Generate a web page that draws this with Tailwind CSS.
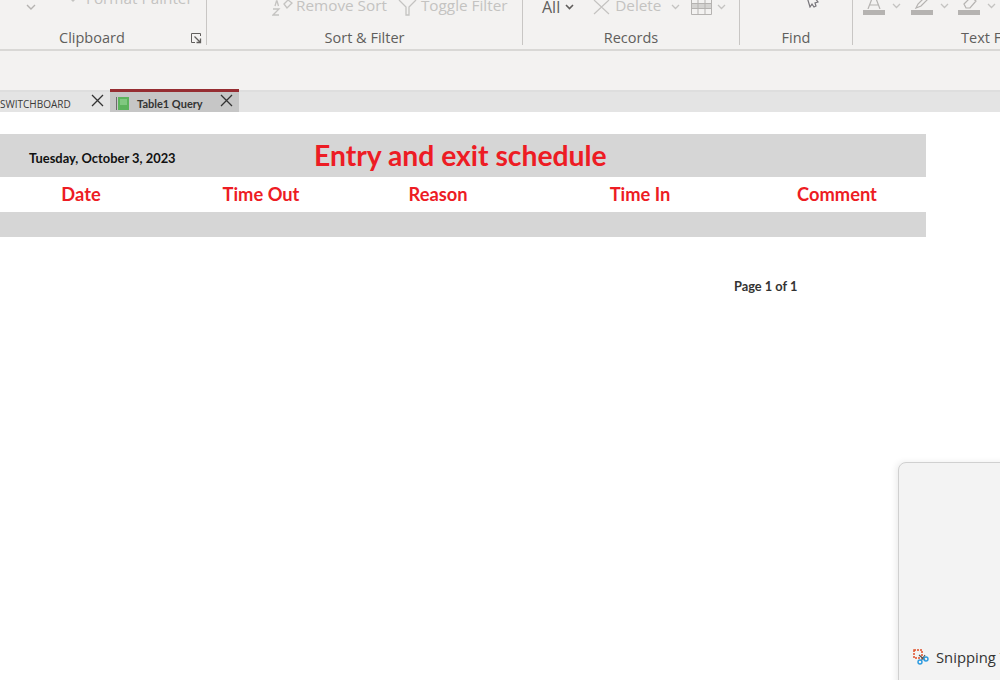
<!DOCTYPE html>
<html>
<head>
<meta charset="utf-8">
<script src="https://cdn.jsdelivr.net/npm/@tailwindcss/browser@4"></script>
</head>
<body class="m-0 bg-white">
<div class="relative w-[1000px] h-[680px] overflow-hidden bg-white font-['Open_Sans',sans-serif]">

  <!-- Ribbon -->
  <div class="flex h-[49px] bg-[#f3f2f1] text-[15.300px] text-[#c4c3c1] overflow-hidden">
    <div class="w-[207px] shrink-0 h-[45px] border-r border-[#c8c6c4] flex flex-col">
      <div class="h-[20px] flex">
        <svg class="ml-[26px] mt-[4px]" width="10" height="7" viewBox="0 0 10 7" fill="none" stroke="#b5b3b1" stroke-width="1.400"><path d="M1 1l4 4 4-4"/></svg>
        <svg class="ml-[29px] -mt-[4px]" width="16" height="10" viewBox="0 0 16 10" fill="#c4c3c1"><path d="M2 0h12L8 6z"/></svg>
        <span class="ml-[5px] -mt-[12px] leading-[20px] whitespace-nowrap">Format Painter</span>
      </div>
      <div class="mt-auto h-[20px] pt-[6px] flex items-center text-[14.500px] text-[#605e5c]">
        <span class="ml-[59px]">Clipboard</span>
        <svg class="ml-[65px]" width="12" height="12" viewBox="0 0 12 12" fill="none" stroke="#605e5c"><path d="M10.500 4V1.500h-9v9H5"/><path d="M4.500 4.500l6 6M10.500 6.500v4h-4" stroke-width="1.300"/></svg>
      </div>
    </div>
    <div class="w-[316px] shrink-0 h-[45px] border-r border-[#c8c6c4] flex flex-col">
      <div class="h-[20px] flex items-start">
        <svg class="ml-[65px]" width="21" height="16" viewBox="0 0 21 16" fill="none" stroke="#c4c3c1" stroke-width="1.300"><path d="M1 9h6l-6 6h6"/><path d="M3 6l1.500-5h.5L6.500 6"/><path d="M12 4l4-4 4 3-5 5z"/></svg>
        <span class="ml-[3px] -mt-[5px] leading-[20px] whitespace-nowrap">Remove Sort</span>
        <svg class="ml-[11px]" width="19" height="16" viewBox="0 0 19 16" fill="none" stroke="#c4c3c1" stroke-width="1.300"><path d="M1 0l7 7v8h3V7l7-7"/></svg>
        <span class="ml-[4px] -mt-[5px] leading-[20px] whitespace-nowrap">Toggle Filter</span>
      </div>
      <div class="mt-auto h-[20px] pt-[6px] flex items-center justify-center text-[14.500px] text-[#605e5c]">Sort &amp; Filter</div>
    </div>
    <div class="w-[217px] shrink-0 h-[45px] border-r border-[#c8c6c4] flex flex-col">
      <div class="h-[20px] flex items-start">
        <span class="ml-[19px] -mt-[3px] text-[16px] leading-[20px] text-[#605e5c]">All</span>
        <svg class="ml-[5px] mt-[4px]" width="9" height="6" viewBox="0 0 9 6" fill="none" stroke="#605e5c" stroke-width="1.600"><path d="M1 1l3.500 3.500L8 1"/></svg>
        <svg class="ml-[19px] -mt-[1px]" width="17" height="16" viewBox="0 0 17 16" fill="none" stroke="#c4c3c1" stroke-width="1.200"><path d="M1 1l15 14M16 1L1 15"/></svg>
        <span class="ml-[5px] -mt-[5px] leading-[20px]">Delete</span>
        <svg class="ml-[10px] mt-[4px]" width="9" height="6" viewBox="0 0 9 6" fill="none" stroke="#c4c3c1" stroke-width="1.300"><path d="M1 1l3.500 3.500L8 1"/></svg>
        <svg class="ml-[11px]" width="21" height="15" viewBox="0 0 21 15" fill="none" stroke="#b5b3b1" stroke-width="1"><path d="M1 3h19v5H1z" fill="#d4d3d1" stroke="none"/><path d="M.500 0v14.500h20V0M.500 3.500h20M.500 8.500h20M7 0v14.500M14 0v14.500"/></svg>
        <svg class="ml-[5px] mt-[4px]" width="9" height="6" viewBox="0 0 9 6" fill="none" stroke="#c4c3c1" stroke-width="1.300"><path d="M1 1l3.500 3.500L8 1"/></svg>
      </div>
      <div class="mt-auto h-[20px] pt-[6px] flex items-center justify-center text-[14.500px] text-[#605e5c]">Records</div>
    </div>
    <div class="w-[113px] shrink-0 h-[45px] border-r border-[#c8c6c4] flex flex-col">
      <div class="h-[20px]">
        <svg class="ml-[66px] block" width="14" height="8" viewBox="0 0 14 8" fill="#f3f2f1" stroke="#77757a" stroke-width="1.200"><path d="M1 -3l3 10 2-3 2 3 2-1-1-3 3-1-3-4"/></svg>
      </div>
      <div class="mt-auto h-[20px] pt-[6px] flex items-center justify-center text-[14.500px] text-[#605e5c]">Find</div>
    </div>
    <div class="flex-1 h-[45px] flex flex-col">
      <div class="h-[20px] flex">
        <div class="ml-[10px] w-[22px] flex flex-col items-center -mt-[4px]">
          <svg width="16" height="13" viewBox="0 0 16 13" fill="none" stroke="#b5b3b1" stroke-width="1.200"><path d="M2 13L7 0h2l5 13M4 9h8"/></svg>
          <div class="w-[22px] h-[5px] bg-[#b5b3b1] mt-[1px]"></div>
        </div>
        <svg class="ml-[7px] mt-[3px]" width="9" height="6" viewBox="0 0 9 6" fill="none" stroke="#c4c3c1" stroke-width="1.300"><path d="M1 1l3.500 3.500L8 1"/></svg>
        <div class="ml-[10px] w-[22px] flex flex-col items-center -mt-[4px]">
          <svg width="18" height="13" viewBox="0 0 18 13" fill="none" stroke="#b5b3b1" stroke-width="1.200"><path d="M3 12l2-4 8-8 3 2-8 8z"/></svg>
          <div class="w-[22px] h-[5px] bg-[#b5b3b1] mt-[1px]"></div>
        </div>
        <svg class="ml-[7px] mt-[3px]" width="9" height="6" viewBox="0 0 9 6" fill="none" stroke="#c4c3c1" stroke-width="1.300"><path d="M1 1l3.500 3.500L8 1"/></svg>
        <div class="ml-[9px] w-[22px] flex flex-col items-center -mt-[4px]">
          <svg width="18" height="13" viewBox="0 0 18 13" fill="none" stroke="#b5b3b1" stroke-width="1.200"><path d="M4 8l7-7 5 4-6 7H6z"/></svg>
          <div class="w-[22px] h-[5px] bg-[#b5b3b1] mt-[1px]"></div>
        </div>
        <svg class="ml-[7px] mt-[3px]" width="9" height="6" viewBox="0 0 9 6" fill="none" stroke="#c4c3c1" stroke-width="1.300"><path d="M1 1l3.500 3.500L8 1"/></svg>
      </div>
      <div class="mt-auto h-[20px] pt-[6px] flex items-center text-[14.500px] text-[#605e5c] pl-[108px] whitespace-nowrap">Text Formatting</div>
    </div>
  </div>

  <!-- Band under ribbon -->
  <div class="h-[41px] bg-[#f3f2f1] border-t-2 border-[#d9d8d6]"></div>

  <!-- Tab strip -->
  <div class="h-[22px] bg-[#e4e4e4] border-t-2 border-[#dedede] flex">
    <div class="w-[110px] flex items-center text-[#3b3a39] text-[10px] whitespace-nowrap">
      <span class="mt-[5px]">SWITCHBOARD</span>
      <svg class="ml-[20px] -mt-[4px]" width="13" height="13" viewBox="0 0 13 13" fill="none" stroke="#333" stroke-width="1.300"><path d="M1 1l11 11M12 1L1 12"/></svg>
    </div>
    <div class="w-[129px] -mt-[3px] h-[23px] bg-[#c6c6c6] border-t-[3px] border-[#962d32] flex items-center font-['Lato',sans-serif]">
      <svg class="ml-[6px] mt-[2px]" width="13" height="13" viewBox="0 0 13 13"><rect x="0" y="0" width="1" height="13" fill="#6b6b6b"/><rect x="2" y="0" width="11" height="13" fill="#5cb35c"/><rect x="4" y="2" width="7" height="6" fill="#80c880"/></svg>
      <span class="ml-[8px] mt-[4px] text-[11px] font-bold text-[#333] whitespace-nowrap">Table1 Query</span>
      <svg class="ml-[17px] -mt-[3px]" width="13" height="13" viewBox="0 0 13 13" fill="none" stroke="#333" stroke-width="1.300"><path d="M1 1l11 11M12 1L1 12"/></svg>
    </div>
  </div>

  <!-- Report -->
  <div class="pt-[22px] font-['Lato',sans-serif] font-bold">
    <div class="w-[926px] h-[43px] bg-[#d6d6d6] flex items-center">
      <span class="ml-[29px] w-[285px] shrink-0 text-[12.900px] text-[#111] mt-[6px] whitespace-nowrap">Tuesday, October 3, 2023</span>
      <span class="text-[28.300px] leading-[1] text-[#ed1c24] whitespace-nowrap">Entry and exit schedule</span>
    </div>
    <div class="w-[926px] h-[35px] grid grid-cols-[162px_198px_156px_248px_146px] items-center text-center text-[18.300px] text-[#ed1c24]">
      <span>Date</span><span>Time Out</span><span>Reason</span><span>Time In</span><span>Comment</span>
    </div>
    <div class="w-[926px] h-[25px] bg-[#d6d6d6]"></div>
    <div class="mt-[41px] ml-[734px] text-[12.800px] leading-[16px] text-[#333] whitespace-nowrap">Page 1 of 1</div>
  </div>

  <!-- Snipping Tool notification (overlay) -->
  <div class="absolute left-[898px] top-[462px] w-[120px] h-[230px] bg-[#f3f3f3] border border-[#d0d0d0] rounded-tl-[8px] shadow-[-2px_0_6px_rgba(0,0,0,0.08)]">
    <div class="absolute left-[14px] top-[183px] flex items-center gap-[7px] text-[14.800px] text-[#333] whitespace-nowrap">
      <svg width="16" height="16" viewBox="0 0 16 16" fill="none"><rect x="1" y="1" width="8" height="8" stroke="#e0502a" stroke-width="1.500" stroke-dasharray="2 1"/><path d="M6 6l6 5M8 12l4-6" stroke="#555" stroke-width="1.200"/><circle cx="7" cy="13" r="2" stroke="#2a9ae0" stroke-width="1.400"/><circle cx="13" cy="10" r="2" stroke="#2a9ae0" stroke-width="1.400"/></svg>
      <span>Snipping Tool</span>
    </div>
  </div>
</div>
</body>
</html>
